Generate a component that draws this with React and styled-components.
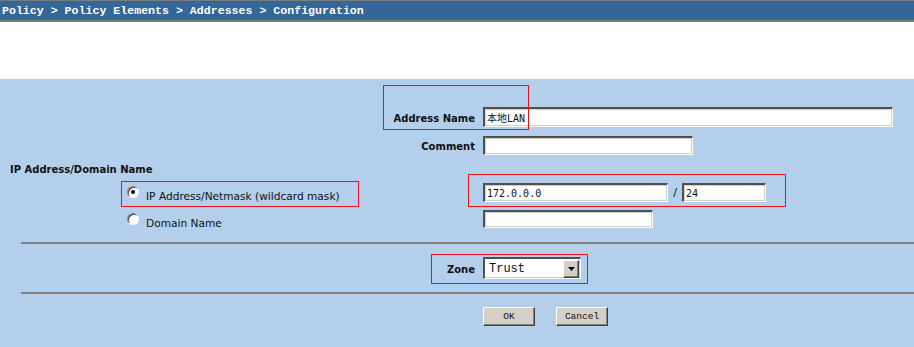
import React from 'react';
import styled, {createGlobalStyle} from 'styled-components';

const PANEL_BLUE = '#b4cfeb';
const RULE_GRAY = '#808080';

const GlobalStyle = createGlobalStyle`
  html, body {
    margin: 0;
    padding: 0;
    background: #ffffff;
  }
  body {
    font-family: "DejaVu Sans", Verdana, sans-serif;
    overflow: hidden;
  }
`;

const Page = styled.div`
  width: 914px;
  height: 347px;
  display: flex;
  flex-direction: column;
`;

const Breadcrumb = styled.div`
  height: 19px;
  border-top: 1px solid #7a7a7a;
  border-bottom: 2px solid #7c7c7c;
  box-shadow: 0 2px 0 #d6d6d6;
  background: #336699;
  color: #ffffff;
  font-family: "Liberation Mono", monospace;
  font-weight: bold;
  font-size: 11.6px;
  line-height: 19px;
  padding-left: 2px;
  white-space: pre;
`;

const Spacer = styled.div`
  height: 57px;
  background: #ffffff;
`;

const Panel = styled.div`
  position: relative;
  flex: 1;
  background: ${PANEL_BLUE};
  padding-top: 24px;
`;

const Row = styled.div`
  display: grid;
  grid-template-columns: 475px 1fr;
  column-gap: 8px;
  align-items: center;
  height: ${props => props.h}px;
`;

const Label = styled.div`
  padding-top: 3px;
  text-align: right;
  font-weight: bold;
  font-size: 10px;
  color: #111;
`;

const Heading = styled.div`
  grid-column: 1 / span 2;
  padding: 3px 0 0 10px;
  font-weight: bold;
  font-size: 10px;
  color: #111;
`;

const Field = styled.div`
  display: flex;
  align-items: center;
`;

const TextBox = styled.input`
  box-sizing: border-box;
  width: ${props => props.w}px;
  height: ${props => props.h || 19}px;
  margin: 0;
  padding: 0 2px;
  background: #ffffff;
  border-style: solid;
  border-width: 2px 1px 1px 2px;
  border-color: #505050 #ffffff #ffffff #505050;
  box-shadow: 1px 1px 0 #d4d0c8 inset, -1px -1px 0 #d4d0c8 inset;
  font-family: "DejaVu Sans Mono", "Noto Sans CJK SC", monospace;
  font-size: 10px;
  color: #111;
  outline: none;
`;

const Slash = styled.span`
  width: 14px;
  text-align: center;
  font-size: 11px;
  color: #111;
`;

const Option = styled.label`
  display: flex;
  align-items: center;
  padding: 7px 0 0 127px;
  font-size: 10.6px;
  color: #111;
`;

const Radio = styled.span`
  position: relative;
  box-sizing: border-box;
  width: 12px;
  height: 12px;
  margin-right: 7px;
  margin-top: -8px;
  border-radius: 50%;
  background: #ffffff;
  border: 1px solid;
  border-color: #808080 #ffffff #ffffff #808080;
  box-shadow: 1px 1px 0 #404040 inset;

  &::after {
    content: "";
    display: ${props => props.checked ? 'block' : 'none'};
    position: absolute;
    left: 3px;
    top: 3px;
    width: 4px;
    height: 4px;
    border-radius: 50%;
    background: #000;
  }
`;

const Rule = styled.div`
  height: 2px;
  margin-left: 21px;
  background: ${RULE_GRAY};
  margin-top: ${props => props.mt || 0}px;
`;

const Select = styled.div`
  box-sizing: border-box;
  width: 98px;
  height: 22px;
  display: flex;
  align-items: center;
  background: #ffffff;
  border-style: solid;
  border-width: 2px 1px 1px 2px;
  border-color: #505050 #ffffff #ffffff #505050;
  box-shadow: -1px -1px 0 #d4d0c8 inset;
`;

const SelectText = styled.span`
  flex: 1;
  padding-left: 4px;
  font-family: "Liberation Mono", monospace;
  font-size: 12px;
  color: #111;
`;

const ArrowButton = styled.span`
  box-sizing: border-box;
  width: 16px;
  height: 18px;
  margin-right: 1px;
  display: flex;
  align-items: center;
  justify-content: center;
  background: #d4d0c8;
  border-style: solid;
  border-width: 1px;
  border-color: #ffffff #404040 #404040 #ffffff;
  box-shadow: -1px -1px 0 #808080 inset;
`;

const ButtonRow = styled.div`
  display: flex;
  gap: 21px;
  padding: 13px 0 0 483px;
`;

const Button = styled.button`
  box-sizing: border-box;
  width: 52px;
  height: 19px;
  margin: 0;
  padding: 0;
  background: #d4d0c8;
  border-style: solid;
  border-width: 1px;
  border-color: #ffffff #404040 #404040 #ffffff;
  box-shadow: -1px -1px 0 #808080 inset;
  font-family: "Liberation Mono", monospace;
  font-size: 9.5px;
  color: #111;
`;

const Annotation = styled.div`
  position: absolute;
  box-sizing: border-box;
  border: 1px solid #e8141c;
  pointer-events: none;
`;

const boxes = [
  {left: 383, top: 6, width: 146, height: 45},
  {left: 121, top: 102, width: 238, height: 26},
  {left: 468, top: 95, width: 318, height: 33},
  {left: 431, top: 175, width: 157, height: 30},
];

export default function App() {
  return (
    <Page>
      <GlobalStyle/>
      <Breadcrumb>{'Policy > Policy Elements > Addresses > Configuration'}</Breadcrumb>
      <Spacer/>
      <Panel>
        <Row h={28}>
          <Label>Address Name</Label>
          <Field><TextBox w={410} h={20} defaultValue="本地LAN" readOnly/></Field>
        </Row>
        <Row h={28}>
          <Label>Comment</Label>
          <Field><TextBox w={210} defaultValue="" readOnly/></Field>
        </Row>
        <Row h={18}>
          <Heading>IP Address/Domain Name</Heading>
        </Row>
        <Row h={31}>
          <Option><Radio checked/>IP Address/Netmask (wildcard mask)</Option>
          <Field>
            <TextBox w={185} defaultValue="172.0.0.0" readOnly/>
            <Slash>/</Slash>
            <TextBox w={84} defaultValue="24" readOnly/>
          </Field>
        </Row>
        <Row h={22}>
          <Option><Radio/>Domain Name</Option>
          <Field><TextBox w={170} h={18} defaultValue="" readOnly/></Field>
        </Row>
        <Rule mt={12}/>
        <Row h={48}>
          <Label>Zone</Label>
          <Field>
            <Select>
              <SelectText>Trust</SelectText>
              <ArrowButton>
                <svg width="7" height="4" viewBox="0 0 7 4">
                  <path d="M0 0h7L3.5 4z" fill="#000"/>
                </svg>
              </ArrowButton>
            </Select>
          </Field>
        </Row>
        <Rule/>
        <ButtonRow>
          <Button>OK</Button>
          <Button>Cancel</Button>
        </ButtonRow>
        {boxes.map((b, i) => (
          <Annotation key={i} style={b}/>
        ))}
      </Panel>
    </Page>
  );
}
